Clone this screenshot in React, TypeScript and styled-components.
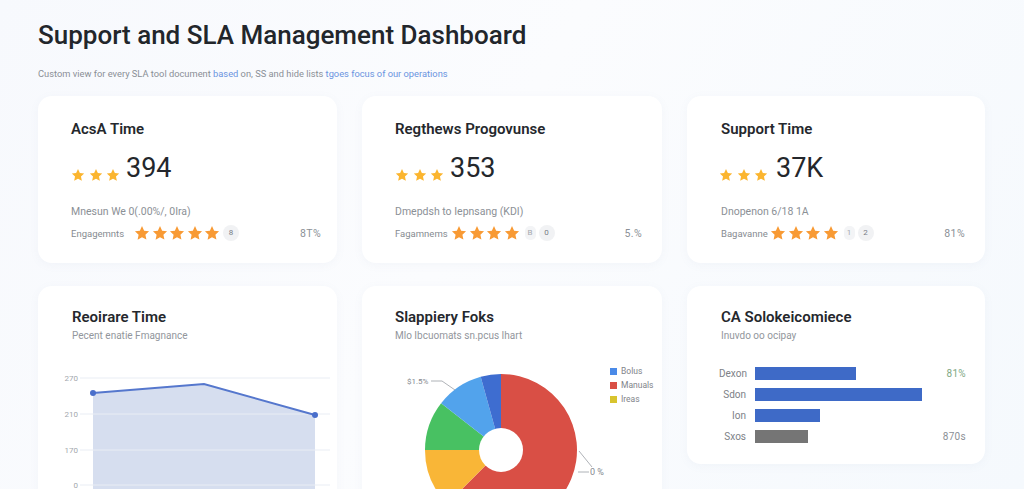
import React from "react";
import styled, { createGlobalStyle } from "styled-components";

const Global = createGlobalStyle`
  html, body { margin: 0; padding: 0; height: 489px; overflow: hidden; background: #f6f9fd; }
  #root { height: 489px; overflow: hidden; }
  * { box-sizing: border-box; }
`;

const Page = styled.main`
  height: 489px;
  overflow: hidden;
  padding: 19px 0 0 38px;
  font-family: Roboto, "Liberation Sans", sans-serif;
  background: linear-gradient(120deg, #f7f9fd 0%, #fbfcfe 45%, #f5f9fd 100%);
  color: #22262b;
`;

const Title = styled.h1`
  margin: 0;
  font-size: 26px;
  line-height: 32px;
  font-weight: 500;
  color: #22262b;
  white-space: nowrap;
`;

const Intro = styled.p`
  margin: 16px 0 0;
  height: 14px;
  font-size: 9.3px;
  line-height: 14px;
  color: #8a8f96;
  white-space: nowrap;
`;

const Accent = styled.span`
  color: #6a94e0;
`;

const Grid = styled.div`
  margin-top: 15px;
  display: grid;
  grid-template-columns: 299px 300px 298px;
  grid-template-rows: 167px auto;
  gap: 23px 25px;
  align-items: start;
`;

const Card = styled.section<{ $height: number }>`
  height: ${(p) => p.$height}px;
  background: #fff;
  border-radius: 14px;
  box-shadow: 0 2px 10px rgba(120, 140, 175, 0.06);
  overflow: hidden;
`;

const KpiBody = styled.div<{ $left: number; $right: number }>`
  padding: 24px ${(p) => p.$right}px 0 ${(p) => p.$left}px;
`;

const KpiTitle = styled.h2`
  margin: 0;
  font-size: 15px;
  line-height: 18px;
  font-weight: 600;
  color: #25282d;
`;

const ValueRow = styled.div`
  margin-top: 15px;
  display: flex;
  align-items: flex-start;
  height: 34px;
`;

const StarGroup = styled.div<{ $gap: number }>`
  display: flex;
  gap: ${(p) => p.$gap}px;
`;

const TopStars = styled(StarGroup)<{ $shift: number }>`
  margin: 15px 0 0 ${(p) => p.$shift}px;
  width: ${(p) => 55 - p.$shift}px;
`;

const Value = styled.div`
  font-size: 27px;
  line-height: 30px;
  font-weight: 400;
  color: #24272c;
`;

const KpiNote = styled.div`
  margin-top: 18px;
  font-size: 10.5px;
  line-height: 14px;
  color: #8b9096;
  white-space: nowrap;
`;

const RatingRow = styled.div`
  margin-top: 4px;
  display: flex;
  align-items: center;
  height: 20px;
`;

const RatingLabel = styled.span<{ $width: number }>`
  width: ${(p) => p.$width}px;
  font-size: 9.5px;
  color: #868b91;
  white-space: nowrap;
`;

const Chip = styled.span`
  width: 11px;
  height: 14px;
  margin-left: 5px;
  border-radius: 5px;
  background: #f3f4f6;
  color: #a5a9af;
  font-size: 8px;
  line-height: 14px;
  text-align: center;
`;

const Dot = styled.span`
  width: 16px;
  height: 16px;
  margin-left: 3px;
  border-radius: 50%;
  background: #f1f2f4;
  color: #777c85;
  font-size: 8px;
  line-height: 16px;
  text-align: center;
`;

const Percent = styled.span`
  margin-left: auto;
  font-size: 10.5px;
  color: #8b9096;
  letter-spacing: 0.4px;
`;

const ChartHead = styled.header<{ $left: number }>`
  padding: 22px 16px 0 ${(p) => p.$left}px;
`;

const ChartTitle = styled.h2`
  margin: 0;
  font-size: 15px;
  line-height: 18px;
  font-weight: 600;
  color: #25282d;
  white-space: nowrap;
`;

const ChartNote = styled.div`
  margin-top: 3px;
  font-size: 10px;
  line-height: 14px;
  color: #92969c;
  white-space: nowrap;
`;

const AreaWrap = styled.div`
  margin-top: 28px;
  padding-left: 20px;
`;

const PieRow = styled.div`
  margin-top: 21px;
  padding-left: 33px;
  display: flex;
  align-items: flex-start;
`;

const Legend = styled.ul`
  list-style: none;
  margin: 2px 0 0 -3px;
  padding: 0;
  display: flex;
  flex-direction: column;
  gap: 4px;
`;

const LegendItem = styled.li`
  display: flex;
  align-items: center;
  gap: 4px;
  height: 10px;
  font-size: 8.5px;
  color: #7f848a;
`;

const Swatch = styled.span<{ $color: string }>`
  width: 7px;
  height: 7px;
  background: ${(p) => p.$color};
`;

const Bars = styled.div`
  margin-top: 24px;
  padding: 0 19px 0 32px;
  display: flex;
  flex-direction: column;
  gap: 8px;
`;

const BarRow = styled.div`
  display: flex;
  align-items: center;
  height: 13px;
`;

const BarLabel = styled.span`
  width: 27px;
  margin-right: 9px;
  text-align: right;
  font-size: 10px;
  color: #7d8187;
  white-space: nowrap;
`;

const Track = styled.div`
  flex: 1;
  height: 13px;
`;

const Fill = styled.div<{ $width: number; $muted: boolean }>`
  width: ${(p) => p.$width}px;
  height: 13px;
  background: ${(p) => (p.$muted ? "#757575" : "#3e6ac7")};
`;

const BarValue = styled.span<{ $green: boolean }>`
  width: 24px;
  text-align: right;
  font-size: 10px;
  letter-spacing: 0.3px;
  white-space: nowrap;
  color: ${(p) => (p.$green ? "#7ea884" : "#8b9096")};
`;

const STAR = "M12 1.6l3.2 6.9 7.4.9-5.5 5.1 1.5 7.4L12 18.3 5.4 22l1.5-7.4L1.4 9.4l7.4-.9z";

function Stars({ count, size, color }: { count: number; size: number; color: string }) {
  return (
    <>
      {Array.from({ length: count }, (_, i) => (
        <svg key={i} width={size} height={size} viewBox="0 0 24 24" aria-hidden="true">
          <path d={STAR} fill={color} />
        </svg>
      ))}
    </>
  );
}

type Kpi = {
  title: string;
  value: string;
  note: string;
  label: string;
  labelWidth: number;
  stars: number;
  chip?: string;
  dot: string;
  percent: string;
  left: number;
  right: number;
  starShift: number;
};

const kpis: Kpi[] = [
  { title: "AcsA Time", value: "394", note: "Mnesun We 0(.00%/, 0Ira)", label: "Engagemnts", labelWidth: 63, stars: 5, dot: "8", percent: "8T%", left: 33, right: 16, starShift: 0 },
  { title: "Regthews Progovunse", value: "353", note: "Dmepdsh to Iepnsang (KDI)", label: "Fagamnems", labelWidth: 56, stars: 4, chip: "B", dot: "0", percent: "5.%", left: 33, right: 20, starShift: 0 },
  { title: "Support Time", value: "37K", note: "Dnopenon 6/18 1A", label: "Bagavanne", labelWidth: 49, stars: 4, chip: "1", dot: "2", percent: "81%", left: 34, right: 20, starShift: -2 },
];

const polar = (deg: number, r: number) => {
  const a = ((deg - 90) * Math.PI) / 180;
  return [106 + r * Math.cos(a), 86 + r * Math.sin(a)];
};

const slice = (from: number, to: number) => {
  const [x1, y1] = polar(from, 76);
  const [x2, y2] = polar(to, 76);
  const large = to - from > 180 ? 1 : 0;
  return `M106 86L${x1} ${y1}A76 76 0 ${large} 1 ${x2} ${y2}Z`;
};

const slices = [
  { from: 0, to: 225, color: "#d94f45" },
  { from: 225, to: 270, color: "#f9b637" },
  { from: 270, to: 308, color: "#48c162" },
  { from: 308, to: 344.5, color: "#52a3ec" },
  { from: 344.5, to: 360, color: "#3e6dd0" },
];

const legend = [
  { name: "Bolus", color: "#4a8ae8" },
  { name: "Manuals", color: "#d94f45" },
  { name: "Ireas", color: "#d8c42e" },
];

const bars = [
  { name: "Dexon", width: 101, value: "81%", muted: false },
  { name: "Sdon", width: 167, value: "", muted: false },
  { name: "Ion", width: 65, value: "", muted: false },
  { name: "Sxos", width: 53, value: "870s", muted: true },
];

const gridLines = [
  { y: 7, label: "270" },
  { y: 43, label: "210" },
  { y: 79, label: "170" },
  { y: 114, label: "0" },
];

function AreaChart() {
  return (
    <svg width="279" height="130" viewBox="0 0 279 130" aria-hidden="true">
      <path d="M35 22L146 13L257 44V130H35Z" fill="#d6deef" />
      {gridLines.map((g) => (
        <g key={g.label}>
          <line x1="22" x2="272" y1={g.y} y2={g.y} stroke="#e9edf4" strokeWidth="1" />
          <text x="20" y={g.y + 3} textAnchor="end" fontSize="8" fill="#a3a7ad" fontFamily="Roboto, sans-serif">
            {g.label}
          </text>
        </g>
      ))}
      <path d="M35 22L146 13L257 44" fill="none" stroke="#5577cd" strokeWidth="2" />
      <circle cx="35" cy="22" r="3" fill="#4a6fcb" />
      <circle cx="257" cy="44" r="3" fill="#4a6fcb" />
    </svg>
  );
}

function PieChart() {
  return (
    <svg width="218" height="180" viewBox="0 0 218 180" aria-hidden="true">
      {slices.map((s) => (
        <path key={s.from} d={slice(s.from, s.to)} fill={s.color} />
      ))}
      <circle cx="106" cy="86" r="22" fill="#fff" />
      <path d="M36 17H47L60 26" fill="none" stroke="#9a9ea4" strokeWidth="0.8" />
      <text x="12" y="20" fontSize="8" fill="#85898f" fontFamily="Roboto, sans-serif">$1.5%</text>
      <path d="M184 87L197 103M183 108H194" fill="none" stroke="#9a9ea4" strokeWidth="0.8" />
      <text x="195" y="111" fontSize="9" fill="#85898f" fontFamily="Roboto, sans-serif">0 %</text>
    </svg>
  );
}

export default function App() {
  return (
    <Page>
      <Global />
      <Title>Support and SLA Management Dashboard</Title>
      <Intro>
        Custom view for every SLA tool document{" "}
        <Accent>based</Accent> on, SS and hide lists <Accent>tgoes focus of our operations</Accent>
      </Intro>
      <Grid>
        {kpis.map((k) => (
          <Card key={k.title} $height={167}>
            <KpiBody $left={k.left} $right={k.right}>
              <KpiTitle>{k.title}</KpiTitle>
              <ValueRow>
                <TopStars $gap={3.5} $shift={k.starShift}>
                  <Stars count={3} size={14} color="#fbb52f" />
                </TopStars>
                <Value>{k.value}</Value>
              </ValueRow>
              <KpiNote>{k.note}</KpiNote>
              <RatingRow>
                <RatingLabel $width={k.labelWidth}>{k.label}</RatingLabel>
                <StarGroup $gap={1.5}>
                  <Stars count={k.stars} size={16} color="#f89a34" />
                </StarGroup>
                {k.chip && <Chip>{k.chip}</Chip>}
                <Dot>{k.dot}</Dot>
                <Percent>{k.percent}</Percent>
              </RatingRow>
            </KpiBody>
          </Card>
        ))}
        <Card $height={240}>
          <ChartHead $left={34}>
            <ChartTitle>Reoirare Time</ChartTitle>
            <ChartNote>Pecent enatie Fmagnance</ChartNote>
          </ChartHead>
          <AreaWrap>
            <AreaChart />
          </AreaWrap>
        </Card>
        <Card $height={240}>
          <ChartHead $left={33}>
            <ChartTitle>Slappiery Foks</ChartTitle>
            <ChartNote>Mlo Ibcuomats sn.pcus Ihart</ChartNote>
          </ChartHead>
          <PieRow>
            <PieChart />
            <Legend>
              {legend.map((l) => (
                <LegendItem key={l.name}>
                  <Swatch $color={l.color} />
                  {l.name}
                </LegendItem>
              ))}
            </Legend>
          </PieRow>
        </Card>
        <Card $height={178}>
          <ChartHead $left={34}>
            <ChartTitle>CA Solokeicomiece</ChartTitle>
            <ChartNote>Inuvdo oo ocipay</ChartNote>
          </ChartHead>
          <Bars>
            {bars.map((b) => (
              <BarRow key={b.name}>
                <BarLabel>{b.name}</BarLabel>
                <Track>
                  <Fill $width={b.width} $muted={b.muted} />
                </Track>
                <BarValue $green={!b.muted}>{b.value}</BarValue>
              </BarRow>
            ))}
          </Bars>
        </Card>
      </Grid>
    </Page>
  );
}
